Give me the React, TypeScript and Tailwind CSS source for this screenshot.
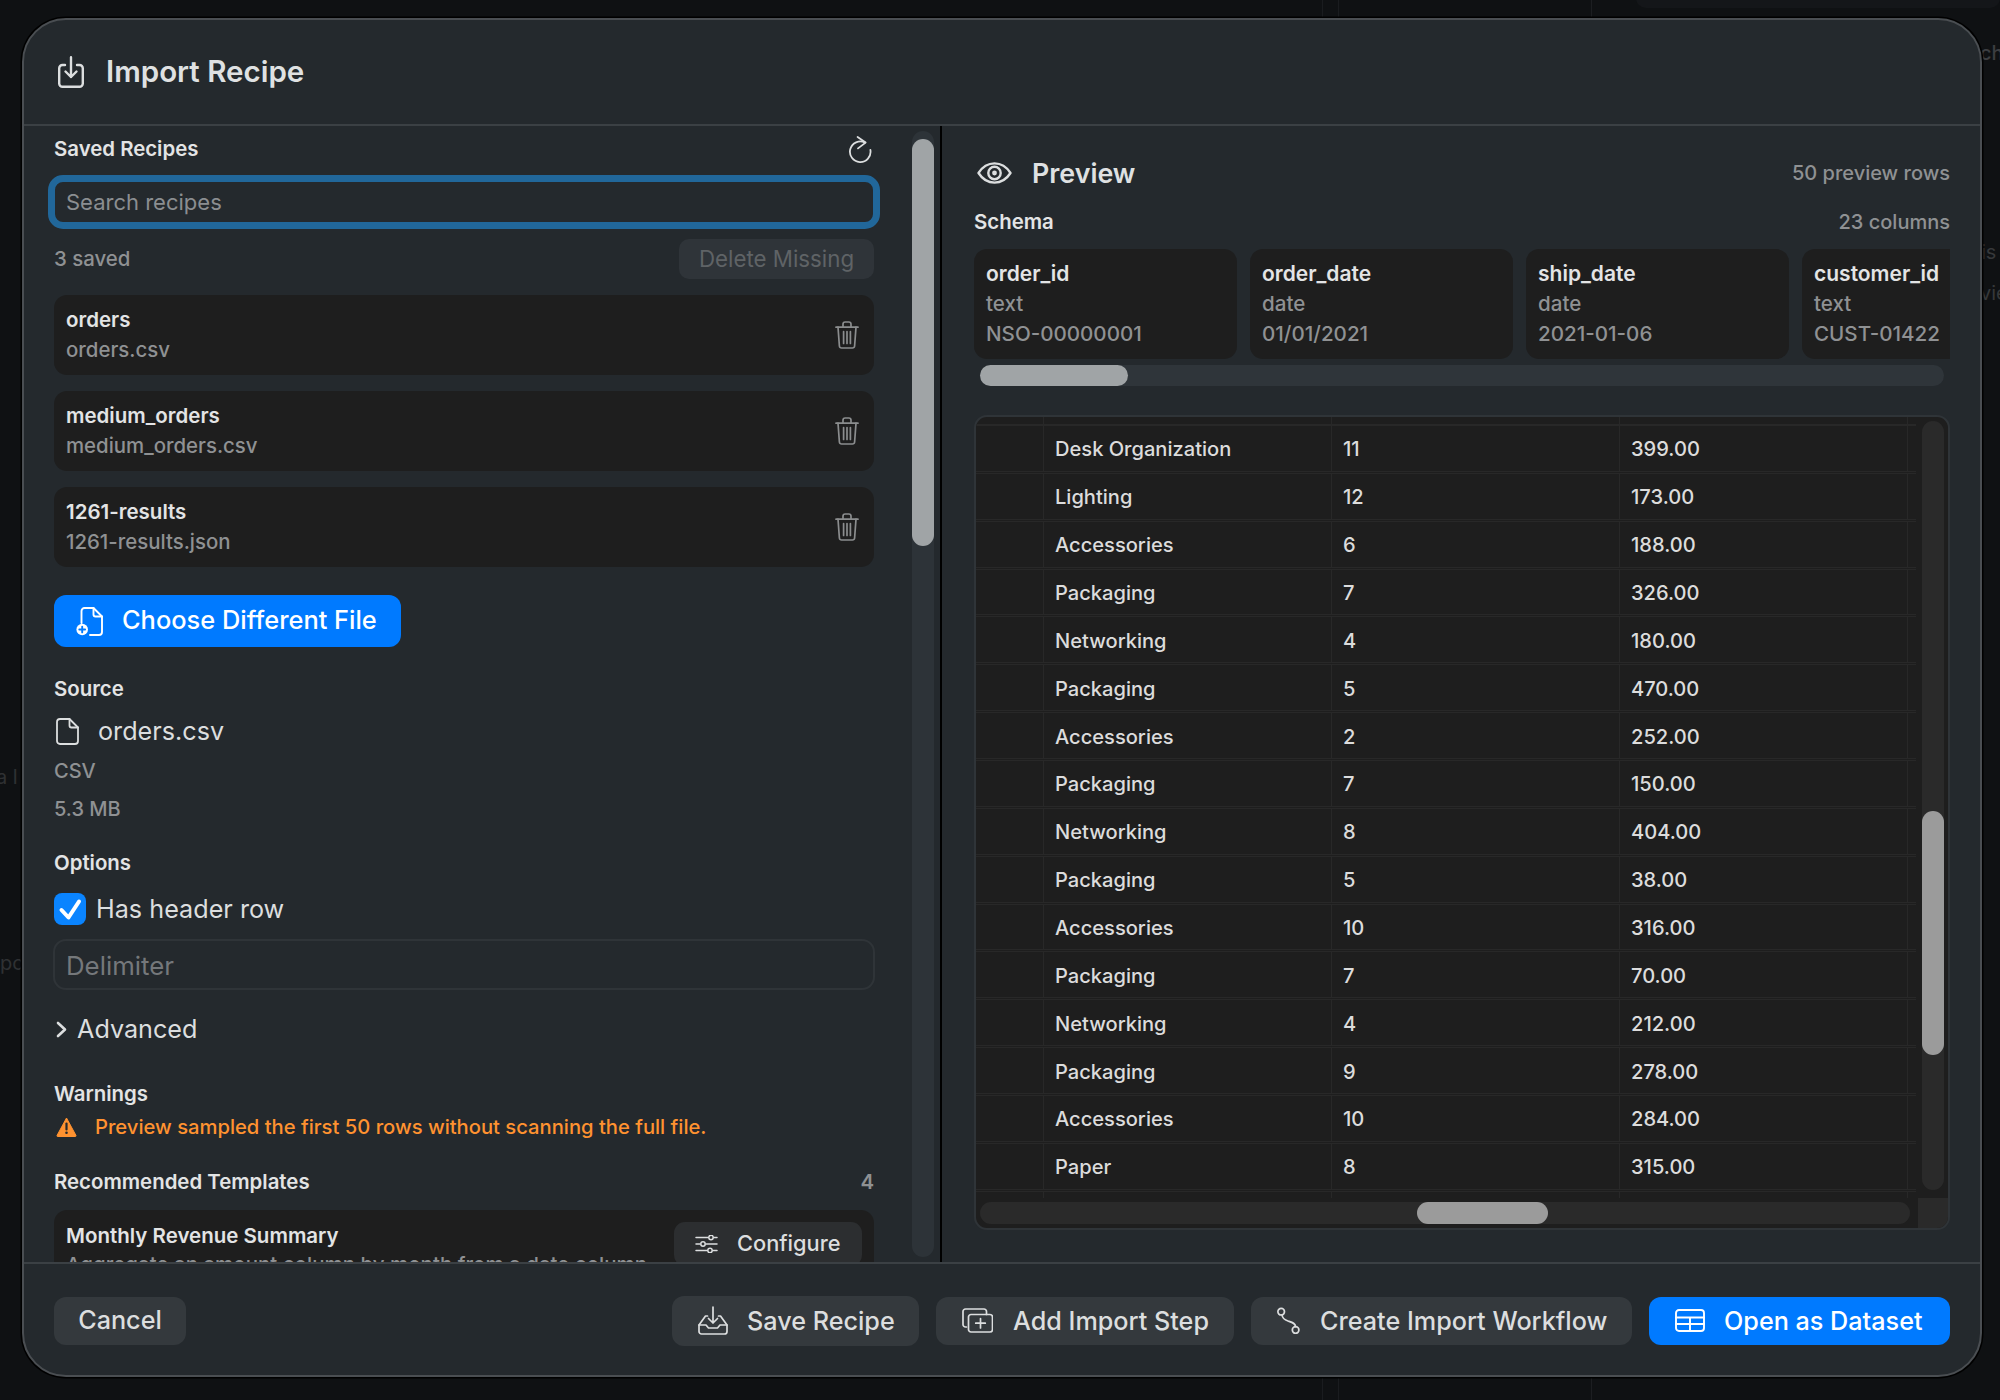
import React from "react";

function Ico({ w, h, children, className = "", sw = 2 }: { w: number; h: number; children: React.ReactNode; className?: string; sw?: number }) {
  return (
    <svg width={w} height={h} viewBox={`0 0 ${w} ${h}`} fill="none" stroke="currentColor" strokeWidth={sw} strokeLinecap="round" strokeLinejoin="round" className={`shrink-0 ${className}`}>
      {children}
    </svg>
  );
}

const ImportIcon = () => (
  <Ico w={26} h={32} sw={2.4} className="text-[#dcdedf]">
    <path d="M7 9H4.5A3.3 3.3 0 0 0 1.2 12.3V27.5A3.3 3.3 0 0 0 4.5 30.8H21.5A3.3 3.3 0 0 0 24.8 27.5V12.3A3.3 3.3 0 0 0 21.5 9H19" />
    <path d="M13 1.2V21M7.5 15.5L13 21L18.5 15.5" />
  </Ico>
);
const RefreshIcon = () => (
  <Ico w={23} h={27} sw={1.8} className="text-[#dcdedf] mr-[2px]">
    <path d="M16 6.6A10.3 10.3 0 1 0 21.4 14" />
    <path d="M8.6 1L16.6 6.6L9 12.4" />
  </Ico>
);
const TrashIcon = () => (
  <Ico w={24} h={28} sw={1.7} className="text-[#8b8d8e]">
    <path d="M1 6.2H23" />
    <path d="M8 6V3.2A2.2 2.2 0 0 1 10.2 1H13.8A2.2 2.2 0 0 1 16 3.2V6" />
    <path d="M3 6.2L4.4 25A2.2 2.2 0 0 0 6.6 27H17.4A2.2 2.2 0 0 0 19.6 25L21 6.2" />
    <path d="M8.6 10.5V22.5M12 10.5V22.5M15.4 10.5V22.5" />
  </Ico>
);
const FilePlusIcon = () => (
  <Ico w={27} h={29} sw={1.9} className="text-white">
    <path d="M5.5 16V4A3 3 0 0 1 8.5 1H17.5L26 9.5V25A3 3 0 0 1 23 28H14" />
    <path d="M17.5 1V7.5A2 2 0 0 0 19.5 9.5H26" />
    <circle cx="6.2" cy="22.5" r="5.8" fill="white" stroke="none" />
    <path d="M6.2 19.6V25.4M3.3 22.5H9.1" stroke="#007aff" strokeWidth="1.9" />
  </Ico>
);
const FileIcon = () => (
  <Ico w={23} h={27} sw={1.8} className="text-[#dcdedf]">
    <path d="M1 4A3 3 0 0 1 4 1H13.5L22 9.5V23A3 3 0 0 1 19 26H4A3 3 0 0 1 1 23Z" />
    <path d="M13.5 1V7.5A2 2 0 0 0 15.5 9.5H22" />
  </Ico>
);
const EyeIcon = () => (
  <Ico w={35} h={22} sw={2.4} className="text-[#dcdedf]">
    <path d="M1.5 11C6 4 11.5 1.4 17.5 1.4S29 4 33.5 11C29 18 23.5 20.6 17.5 20.6S6 18 1.5 11Z" />
    <circle cx="17.5" cy="11" r="6.2" />
    <circle cx="17.5" cy="11" r="2.4" fill="currentColor" stroke="none" />
  </Ico>
);
const WarnIcon = () => (
  <svg width="21" height="20" viewBox="0 0 21 20" className="shrink-0">
    <path d="M10.5 1L20 18.5A.8.8 0 0 1 19.3 19.5H1.7A.8.8 0 0 1 1 18.5Z" fill="#ff9230" stroke="#ff9230" strokeWidth="1" strokeLinejoin="round" />
    <path d="M10.5 6.5V12.5" stroke="#24292d" strokeWidth="2.2" strokeLinecap="round" />
    <circle cx="10.5" cy="15.8" r="1.3" fill="#24292d" />
  </svg>
);
const SlidersIcon = () => (
  <Ico w={23} h={18} sw={1.5} className="text-[#dcdedf]">
    <path d="M1 2.5H13M19 2.5H22M1 9H5M11 9H22M1 15.5H12M18 15.5H22" />
    <circle cx="16" cy="2.5" r="2.2" />
    <circle cx="8" cy="9" r="2.2" />
    <circle cx="15" cy="15.5" r="2.2" />
  </Ico>
);
const SaveIcon = () => (
  <Ico w={30} h={29} sw={1.7} className="text-[#dcdedf]">
    <path d="M9.5 10H7.5L1 19V25.5A2.5 2.5 0 0 0 3.5 28H26.5A2.5 2.5 0 0 0 29 25.5V19L22.5 10H20.5" />
    <path d="M1 19H8L10.5 22H19.5L22 19H29" />
    <path d="M15 1V17M10.5 12.5L15 17L19.5 12.5" />
  </Ico>
);
const AddStepIcon = () => (
  <Ico w={31} h={25} sw={1.7} className="text-[#dcdedf]">
    <path d="M4.5 19H3.5A2.5 2.5 0 0 1 1 16.5V3.5A2.5 2.5 0 0 1 3.5 1H22A2.5 2.5 0 0 1 24.5 3.5V6.5" />
    <rect x="6.5" y="6.5" width="24" height="17.5" rx="2.5" />
    <path d="M18.5 10.5V20M13.7 15.2H23.3" />
  </Ico>
);
const RouteIcon = () => (
  <Ico w={23} h={27} sw={1.7} className="text-[#dcdedf]">
    <circle cx="4.2" cy="4.7" r="3.3" />
    <circle cx="18.6" cy="23" r="3.3" />
    <path d="M5 8C5.5 12 8 13 11 14C15 15.3 18.4 16 18.6 19.7" />
  </Ico>
);
const TableIcon = () => (
  <Ico w={30} h={23} sw={1.9} className="text-white">
    <rect x="1" y="1" width="28" height="21" rx="3" />
    <path d="M1 8.5H29M1 15H29M15 8.5V22" />
  </Ico>
);

const recipes = [
  ["orders", "orders.csv"],
  ["medium_orders", "medium_orders.csv"],
  ["1261-results", "1261-results.json"],
];
const schema = [
  ["order_id", "text", "NSO-00000001"],
  ["order_date", "date", "01/01/2021"],
  ["ship_date", "date", "2021-01-06"],
  ["customer_id", "text", "CUST-01422"],
];
const rows = [
  ["Desk Organization", "11", "399.00"],
  ["Lighting", "12", "173.00"],
  ["Accessories", "6", "188.00"],
  ["Packaging", "7", "326.00"],
  ["Networking", "4", "180.00"],
  ["Packaging", "5", "470.00"],
  ["Accessories", "2", "252.00"],
  ["Packaging", "7", "150.00"],
  ["Networking", "8", "404.00"],
  ["Packaging", "5", "38.00"],
  ["Accessories", "10", "316.00"],
  ["Packaging", "7", "70.00"],
  ["Networking", "4", "212.00"],
  ["Packaging", "9", "278.00"],
  ["Accessories", "10", "284.00"],
  ["Paper", "8", "315.00"],
  ["", "", ""],
];

function Cells({ r }: { r: string[] }) {
  return (
    <>
      <div className="w-[68px] h-full border-r border-[#282828]" />
      <div className="w-[288px] h-full border-r border-[#282828] pl-[11px] pt-[2px] flex items-center">{r[0]}</div>
      <div className="w-[288px] h-full border-r border-[#282828] pl-[11px] pt-[2px] flex items-center">{r[1]}</div>
      <div className="w-[288px] h-full border-r border-[#282828] pl-[11px] pt-[2px] flex items-center">{r[2]}</div>
    </>
  );
}

function FooterBtn({ w, h = "h-[48px]", gap = "gap-[20px]", icon, label, primary }: { w: string; h?: string; gap?: string; icon: React.ReactNode; label: string; primary?: boolean }) {
  return (
    <div className={`${w} ${h} ${gap} flex items-center pl-[26px] rounded-[12px] text-[25.2px] font-medium leading-none ${primary ? "bg-[#007aff] text-white" : "bg-[#34393d] text-[#dcdedf]"}`}>
      {icon}
      <span className="pt-[2px]">{label}</span>
    </div>
  );
}

export default function App() {
  return (
    <div className="relative w-full h-screen overflow-hidden bg-[#0f1113] [font-family:Inter,sans-serif]">
      <div className="absolute left-[1322px] top-0 w-[17px] h-full border-x border-[#1a1c1f]" />
      <div className="absolute left-[1591px] top-0 w-px h-full bg-[#1c1e21]" />
      <div className="absolute left-[1636px] top-[-12px] w-[364px] h-[20px] rounded-[10px] bg-[#141619]" />
      <div className="absolute left-[1980px] top-[39px] text-[20px] leading-[28px] font-medium text-[#3c3e41]">ch</div>
      <div className="absolute left-[1981px] top-[238px] text-[20px] leading-[28px] text-[#36383a]">is</div>
      <div className="absolute left-[1980px] top-[279px] text-[20px] leading-[28px] text-[#36383a]">vie</div>
      <div className="absolute left-[-4px] top-[763px] text-[20px] leading-[28px] text-[#2f3133]">a l</div>
      <div className="absolute left-0 top-[949px] text-[20px] leading-[28px] text-[#2f3133]">po</div>

      <div className="relative flex flex-col ml-[22px] mt-[18px] w-[1960px] h-[1359px] rounded-[44px] border-2 border-[#4a4e52] bg-[#24292d] shadow-[0_0_0_1.5px_#000] overflow-hidden">
        {/* header */}
        <div className="h-[106px] shrink-0 border-b-2 border-[#3b4044] flex items-center pl-[34px] gap-[22px]">
          <ImportIcon />
          <h1 className="text-[29.5px] font-semibold text-[#dfe1e2] leading-none">Import Recipe</h1>
        </div>

        {/* main */}
        <div className="flex flex-1 min-h-0">
          {/* left */}
          <div className="flex w-[916px] shrink-0">
            <div className="ml-[20px] w-[840px] px-[10px] shrink-0 overflow-hidden pt-[11px]">
              <div className="h-[24px] flex items-center justify-between text-[20.4px] font-semibold text-[#e3e4e5]">
                <span>Saved Recipes</span>
                <RefreshIcon />
              </div>
              <input readOnly placeholder="Search recipes" className="mt-[14px] -ml-[6px] block w-[832px] h-[54px] border-[7px] border-[#21679a] rounded-[15px] bg-[#24292d] pl-[11px] text-[22px] placeholder:text-[#8b8e91] outline-none" />
              <div className="mt-[10px] h-[40px] flex items-center justify-between">
                <span className="text-[20.4px] text-[#8f9193] font-medium">3 saved</span>
                <div className="w-[195px] h-[40px] rounded-[10px] bg-[#2f3439] text-[#5f6366] text-[22.3px] flex items-center justify-center">Delete Missing</div>
              </div>
              <div className="mt-[16px] flex flex-col gap-[16px]">
                {recipes.map(([a, b]) => (
                  <div key={a} className="h-[80px] rounded-[13px] bg-[#1e1e1e] flex items-center justify-between pl-[12px] pr-[15px]">
                    <div className="flex flex-col gap-[6px]">
                      <span className="text-[20.5px] leading-[24px] font-semibold text-[#e3e4e5]">{a}</span>
                      <span className="text-[20.4px] leading-[24px] text-[#8f9193] font-medium">{b}</span>
                    </div>
                    <TrashIcon />
                  </div>
                ))}
              </div>
              <div className="mt-[28px] w-[347px] h-[52px] rounded-[12px] bg-[#007aff] flex items-center pl-[22px] gap-[19px] text-white text-[25.4px] font-medium leading-none">
                <FilePlusIcon />
                <span className="pb-[2px]">Choose Different File</span>
              </div>
              <div className="mt-[30px] h-[24px] flex items-center text-[20.4px] font-semibold text-[#e3e4e5]">Source</div>
              <div className="mt-[14px] h-[32px] flex items-center pl-[2px] gap-[19px] text-[25.2px] text-[#dcdedf] leading-none">
                <FileIcon />
                <span className="pt-[2px]">orders.csv</span>
              </div>
              <div className="mt-[12px] h-[24px] flex items-center text-[20px] font-medium text-[#8f9193]">CSV</div>
              <div className="mt-[14px] h-[24px] flex items-center text-[20px] font-medium text-[#8f9193]">5.3 MB</div>
              <div className="mt-[30px] h-[24px] flex items-center text-[20.4px] font-semibold text-[#e3e4e5]">Options</div>
              <div className="mt-[18px] h-[32px] flex items-center gap-[10px] text-[25.2px] text-[#dcdedf] leading-none">
                <div className="w-[32px] h-[32px] rounded-[8px] bg-[#0a84ff] flex items-center justify-center">
                  <svg width="32" height="32" viewBox="0 0 32 32" fill="none" stroke="white" strokeWidth="4" strokeLinecap="round" strokeLinejoin="round">
                    <path d="M7.5 17L14.5 24.5L25 8.5" />
                  </svg>
                </div>
                <span className="pt-[2px]">Has header row</span>
              </div>
              <div className="mt-[14px] -mx-px h-[51px] rounded-[13px] border-2 border-[#2f3438] flex items-center pl-[11px] pt-[2px] text-[25.8px] text-[#75787b] leading-none">Delimiter</div>
              <div className="mt-[23px] h-[32px] flex items-center gap-[10px] pl-[2px] pt-[1px] text-[25.2px] text-[#dcdedf] leading-none">
                <svg width="11" height="17" viewBox="0 0 11 17" fill="none" stroke="currentColor" strokeWidth="2.6" strokeLinecap="round" strokeLinejoin="round" className="shrink-0">
                  <path d="M2 2L9 8.5L2 15" />
                </svg>
                <span>Advanced</span>
              </div>
              <div className="mt-[37px] h-[24px] flex items-center text-[20.4px] font-semibold text-[#e3e4e5]">Warnings</div>
              <div className="mt-[9px] h-[24px] flex items-center gap-[18px] pl-[2px] text-[20.2px] font-medium text-[#ff9230] leading-none">
                <WarnIcon />
                <span>Preview sampled the first 50 rows without scanning the full file.</span>
              </div>
              <div className="mt-[31px] h-[24px] flex items-center justify-between text-[20.4px] font-semibold text-[#e3e4e5]">
                <span>Recommended Templates</span>
                <span className="text-[#8f9193]">4</span>
              </div>
              <div className="mt-[16px] h-[120px] rounded-[13px] bg-[#1e1e1e] flex justify-between pl-[12px] pr-[12px] pt-[12px]">
                <div className="flex flex-col gap-[5px] pt-[2px]">
                  <span className="text-[20.5px] leading-[24px] font-semibold text-[#e3e4e5]">Monthly Revenue Summary</span>
                  <span className="text-[20.5px] leading-[24px] font-medium text-[#8f9193]">Aggregate an amount column by month from a date column</span>
                </div>
                <div className="w-[188px] h-[44px] rounded-[11px] bg-[#2c2e30] flex items-center gap-[19px] pl-[21px] text-[21.8px] font-medium text-[#dcdedf] leading-none">
                  <SlidersIcon />
                  <span>Configure</span>
                </div>
              </div>
            </div>
            <div className="ml-[28px] my-[5px] w-[22px] shrink-0 rounded-full bg-[#2d3338] pt-[8px]">
              <div className="h-[407px] rounded-full bg-[#a0a4a6]" />
            </div>
          </div>
          <div className="w-[2px] shrink-0 bg-black" />

          {/* right */}
          <div className="flex-1 min-w-0 pl-[32px] pr-[30px] pt-[27px]">
            <div className="h-[40px] flex items-center">
              <span className="ml-[3px]"><EyeIcon /></span>
              <span className="ml-[20px] text-[26.8px] font-semibold text-[#dfe1e2] leading-none">Preview</span>
              <span className="ml-auto text-[20px] font-medium text-[#8f9193]">50 preview rows</span>
            </div>
            <div className="mt-[17px] h-[24px] flex items-center justify-between">
              <span className="text-[20.4px] font-semibold text-[#e3e4e5]">Schema</span>
              <span className="text-[20px] font-medium text-[#8f9193]">23 columns</span>
            </div>
            <div className="mt-[15px] flex gap-[13px] overflow-hidden">
              {schema.map(([a, b, c]) => (
                <div key={a} className="w-[263px] h-[110px] shrink-0 rounded-[13px] bg-[#1e1e1e] pl-[12px] pt-[13px] flex flex-col gap-[6px]">
                  <span className="text-[21px] leading-[24px] font-semibold text-[#e3e4e5]">{a}</span>
                  <span className="text-[20.6px] leading-[24px] font-medium text-[#8f9193]">{b}</span>
                  <span className="text-[20.6px] leading-[24px] font-medium text-[#8f9193] whitespace-nowrap">{c}</span>
                </div>
              ))}
            </div>
            <div className="mt-[6px] ml-[6px] w-[964px] h-[21px] rounded-full bg-[#2f353a]">
              <div className="w-[148px] h-full rounded-full bg-[#a0a4a6]" />
            </div>
            <div className="mt-[29px] w-[976px] h-[815px] rounded-[13px] border-2 border-[#2f3438] bg-[#1e1e1e] overflow-hidden text-[20.1px] text-[#dcdcdc] font-medium">
              <div className="flex h-[781px]">
                <div className="w-[942px] h-full overflow-hidden">
                  <div className="w-[940px] h-[8px] flex border-b border-[#282828]"><Cells r={["", "", ""]} /></div>
                  {rows.map((r, i) => (
                    <div key={i} className="w-[940px] h-[46.87px] mb-[1px] flex border-y border-[#282828]">
                      <Cells r={r} />
                    </div>
                  ))}
                </div>
                <div className="ml-[4px] mt-[4px] w-[22px] h-[769px] rounded-full bg-[#2a2a2a] pt-[390px]">
                  <div className="h-[244px] rounded-full bg-[#9b9b9b]" />
                </div>
              </div>
              <div className="flex h-[30px]">
                <div className="ml-[4px] mt-[4px] w-[930px] h-[22px] rounded-full bg-[#2a2a2a] pl-[437px]">
                  <div className="w-[131px] h-full rounded-full bg-[#9b9b9b]" />
                </div>
                <div className="ml-[8px] w-[30px] h-full bg-[#2a2a2a]" />
              </div>
            </div>
          </div>
        </div>

        {/* footer */}
        <div className="h-[113px] shrink-0 border-t-2 border-[#3b4044] flex items-center justify-between pl-[30px] pr-[30px] pt-[2px]">
          <div className="w-[132px] h-[48px] rounded-[12px] bg-[#34393d] text-[#dcdedf] text-[25.2px] font-medium flex items-center justify-center leading-none">Cancel</div>
          <div className="flex items-center gap-[17px]">
            <FooterBtn w="w-[247px]" h="h-[50px]" gap="gap-[19px]" icon={<SaveIcon />} label="Save Recipe" />
            <FooterBtn w="w-[298px]" icon={<AddStepIcon />} label="Add Import Step" />
            <FooterBtn w="w-[381px]" icon={<RouteIcon />} label="Create Import Workflow" />
            <FooterBtn w="w-[301px]" gap="gap-[19px]" icon={<TableIcon />} label="Open as Dataset" primary />
          </div>
        </div>
      </div>
    </div>
  );
}
